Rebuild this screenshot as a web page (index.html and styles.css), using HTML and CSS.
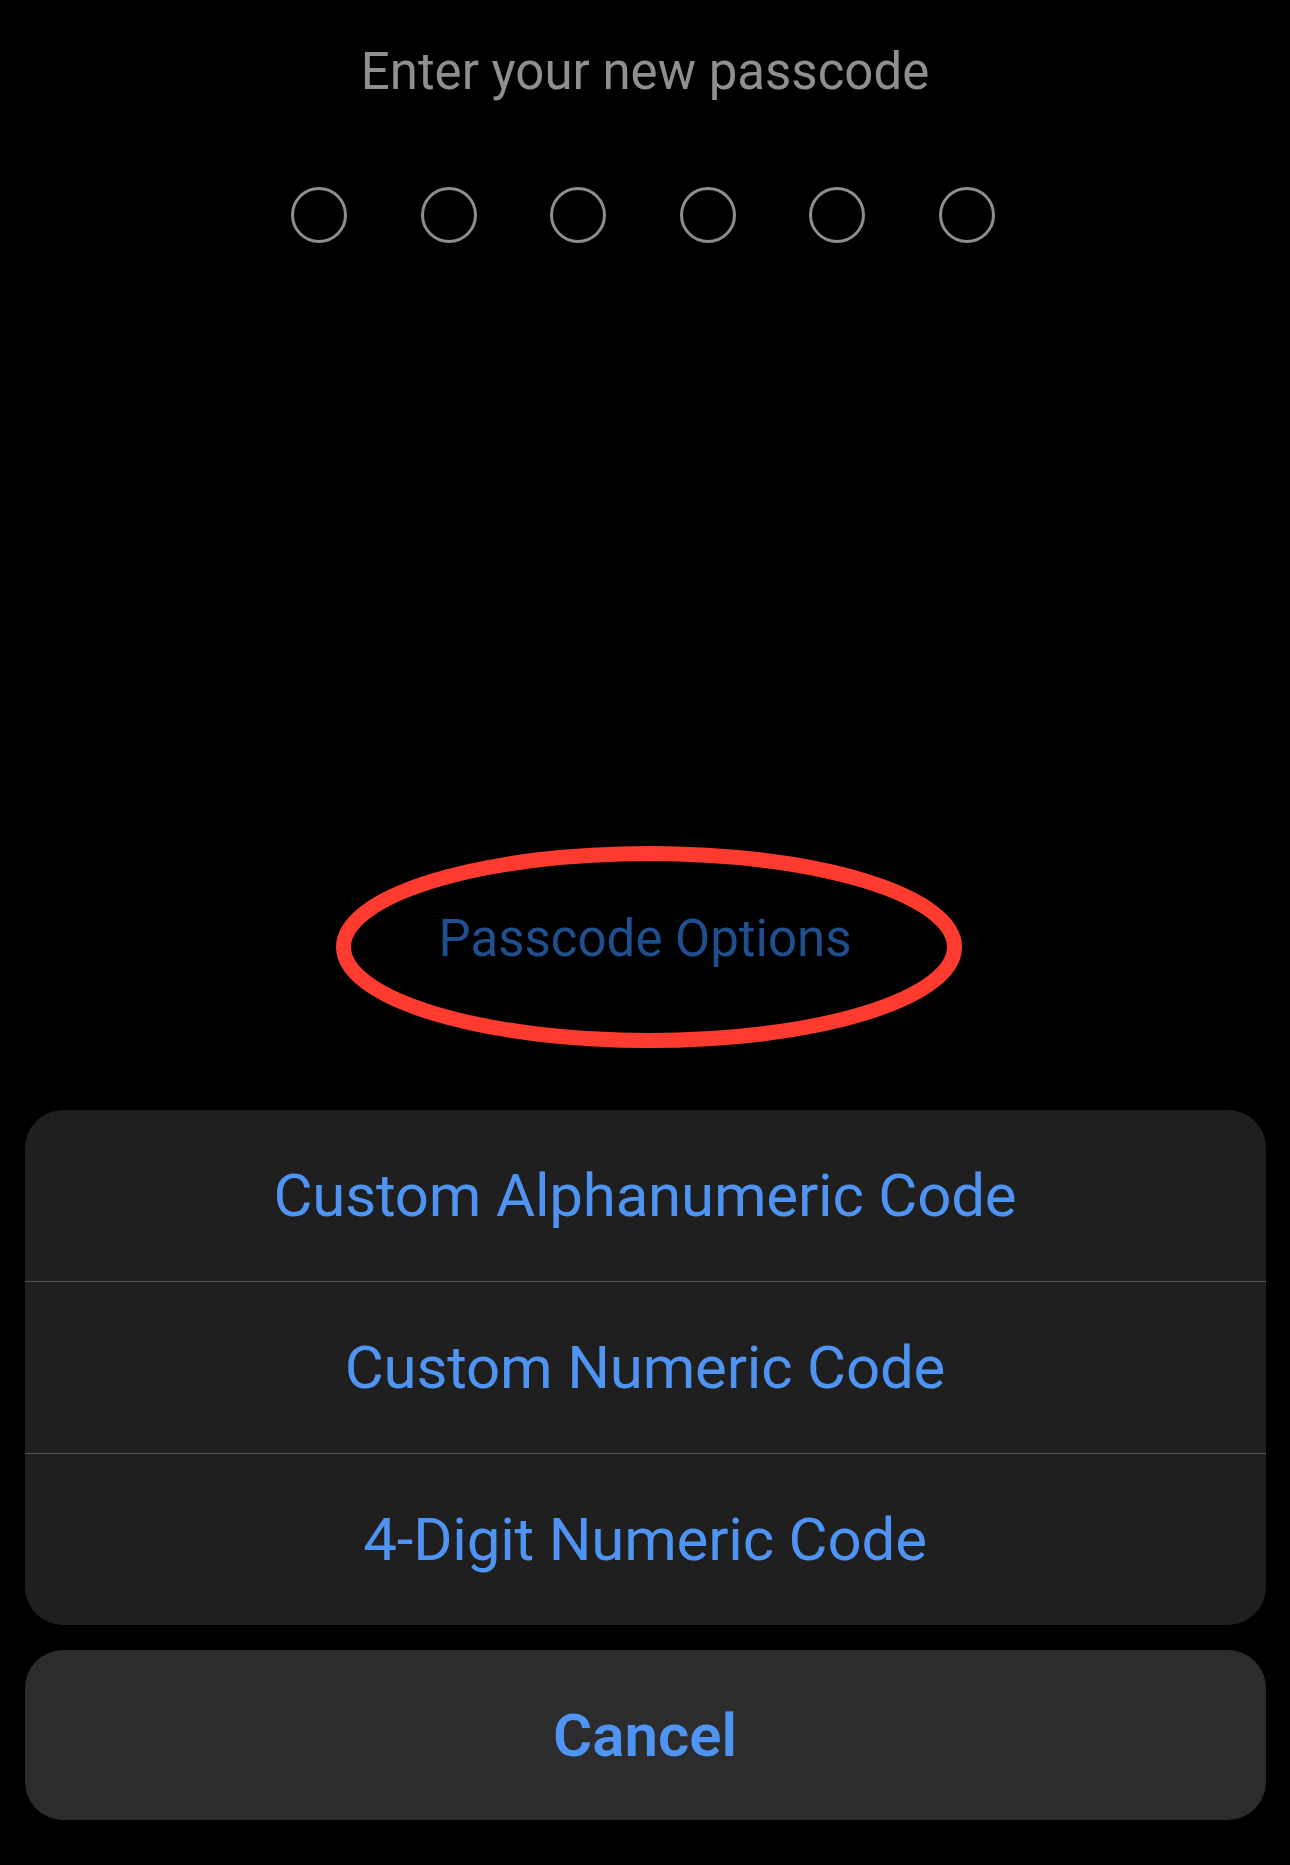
FILE: index.html
```html
<!DOCTYPE html>
<html>
<head>
<meta charset="utf-8">
<link rel="stylesheet" href="styles.css">
</head>
<body>
<div class="screen">
  <div class="title">Enter your new passcode</div>
  <div class="dots">
    <span class="dot"></span><span class="dot"></span><span class="dot"></span>
    <span class="dot"></span><span class="dot"></span><span class="dot"></span>
  </div>
  <div class="options">
    <span class="options-label">Passcode Options</span>
    <svg class="ring" width="626" height="202" viewBox="0 0 626 202">
      <ellipse cx="313" cy="101" rx="305.5" ry="93.5" fill="none" stroke="#ff3b30" stroke-width="15"/>
    </svg>
  </div>
  <div class="sheet">
    <div class="row">Custom Alphanumeric Code</div>
    <div class="sep"></div>
    <div class="row">Custom Numeric Code</div>
    <div class="sep"></div>
    <div class="row">4-Digit Numeric Code</div>
  </div>
  <div class="cancel">Cancel</div>
</div>
</body>
</html>
```
FILE: styles.css
```css
html, body {
  margin: 0;
  padding: 0;
  background: #000;
}
.screen {
  width: 1290px;
  height: 1865px;
  display: flex;
  flex-direction: column;
  align-items: center;
  background: #000;
  font-family: Roboto, Inter, "Liberation Sans", sans-serif;
}
.title {
  margin-top: 41px;
  font-size: 51px;
  line-height: 62px;
  color: #8e8e93;
}
.dots {
  display: flex;
  gap: 73.6px;
  margin-top: 84px;
  margin-left: -4px;
}
.dot {
  width: 56px;
  height: 56px;
  box-sizing: border-box;
  border: 3px solid #8e8e8e;
  border-radius: 50%;
}
.options {
  position: relative;
  margin-top: 665px;
  height: 62px;
  display: flex;
  align-items: center;
  justify-content: center;
}
.options-label {
  font-size: 51px;
  line-height: 62px;
  color: #1f4f8e;
}
.ring {
  position: absolute;
  left: 50%;
  top: 50%;
  transform: translate(-50%, -50%);
  margin-left: 4px;
  margin-top: 8px;
}
.sheet {
  margin-top: 140px;
  width: 1241px;
  background: #1f1f1f;
  border-radius: 38px;
  overflow: hidden;
}
.row {
  height: 171px;
  display: flex;
  align-items: center;
  justify-content: center;
  font-size: 60px;
  color: #4f94f2;
  letter-spacing: -0.2px;
}
.sep {
  height: 1px;
  background: #545456;
}
.cancel {
  margin-top: 25px;
  width: 1241px;
  height: 170px;
  background: #2c2c2e;
  border-radius: 38px;
  display: flex;
  align-items: center;
  justify-content: center;
  font-size: 60px;
  font-weight: 600;
  color: #4f94f2;
}
```
